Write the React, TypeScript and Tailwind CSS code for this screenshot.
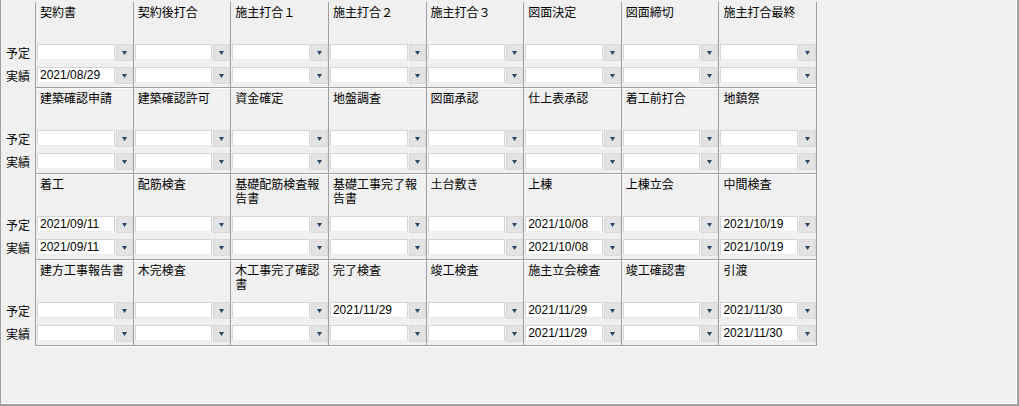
import React from "react";

type Section = {
  titles: string[];
  plan: string[];
  actual: string[];
};

const sections: Section[] = [
  {
    titles: ["契約書", "契約後打合", "施主打合１", "施主打合２", "施主打合３", "図面決定", "図面締切", "施主打合最終"],
    plan: ["", "", "", "", "", "", "", ""],
    actual: ["2021/08/29", "", "", "", "", "", "", ""],
  },
  {
    titles: ["建築確認申請", "建築確認許可", "資金確定", "地盤調査", "図面承認", "仕上表承認", "着工前打合", "地鎮祭"],
    plan: ["", "", "", "", "", "", "", ""],
    actual: ["", "", "", "", "", "", "", ""],
  },
  {
    titles: ["着工", "配筋検査", "基礎配筋検査報告書", "基礎工事完了報告書", "土台敷き", "上棟", "上棟立会", "中間検査"],
    plan: ["2021/09/11", "", "", "", "", "2021/10/08", "", "2021/10/19"],
    actual: ["2021/09/11", "", "", "", "", "2021/10/08", "", "2021/10/19"],
  },
  {
    titles: ["建方工事報告書", "木完検査", "木工事完了確認書", "完了検査", "竣工検査", "施主立会検査", "竣工確認書", "引渡"],
    plan: ["", "", "", "2021/11/29", "", "2021/11/29", "", "2021/11/30"],
    actual: ["", "", "", "", "", "2021/11/29", "", "2021/11/30"],
  },
];

function DateBox({ value }: { value: string }) {
  return (
    <div className="flex h-[17px] pl-[1px]">
      <div className="flex-1 min-w-0 h-[16px] bg-white border border-[#d5d5d5] border-b-[#ececec] pl-[2px] text-[12px] leading-[14px] text-black font-['Liberation_Sans',Arial,sans-serif] overflow-hidden whitespace-nowrap">
        {value}
      </div>
      <div className="ml-[1px] w-[17px] h-[17px] bg-[#e3e3e3] border border-[#d9d9d9] flex items-center justify-center shrink-0">
        <svg width="5" height="4" viewBox="0 0 5 4">
          <polygon points="0,0 5,0 2.5,4" fill="#2b4565" />
        </svg>
      </div>
    </div>
  );
}

export default function App() {
  return (
    <div className="w-[1019px] h-[406px] bg-[#f0f0f0] border-l border-r-2 border-b-2 border-[#a0a0a0] shadow-[inset_-1px_-1px_0_#ffffff] pt-[2px] font-['Noto_Sans_CJK_JP',sans-serif] text-[12px] text-black">
      {sections.map((s, si) => (
        <div key={si} className="flex">
          <div className="w-[34px] shrink-0 flex flex-col">
            <div className="h-[42px]" />
            <div className="h-[17px] flex items-center justify-center leading-none">予定</div>
            <div className="h-[6px]" />
            <div className="h-[17px] flex items-center justify-center leading-none">実績</div>
          </div>
          <div className="w-[782px] grid grid-cols-8 border-r border-b border-[#a0a0a0] shadow-[0_1px_0_#ffffff]">
            {s.titles.map((t, ci) => (
              <div key={ci} className="border-l border-[#a0a0a0] flex flex-col pb-[3px]">
                <div className="h-[42px] pl-[4px] pr-[4px] pt-[3px] leading-[14px] break-all">{t}</div>
                <DateBox value={s.plan[ci]} />
                <div className="h-[6px]" />
                <DateBox value={s.actual[ci]} />
              </div>
            ))}
          </div>
        </div>
      ))}
    </div>
  );
}
